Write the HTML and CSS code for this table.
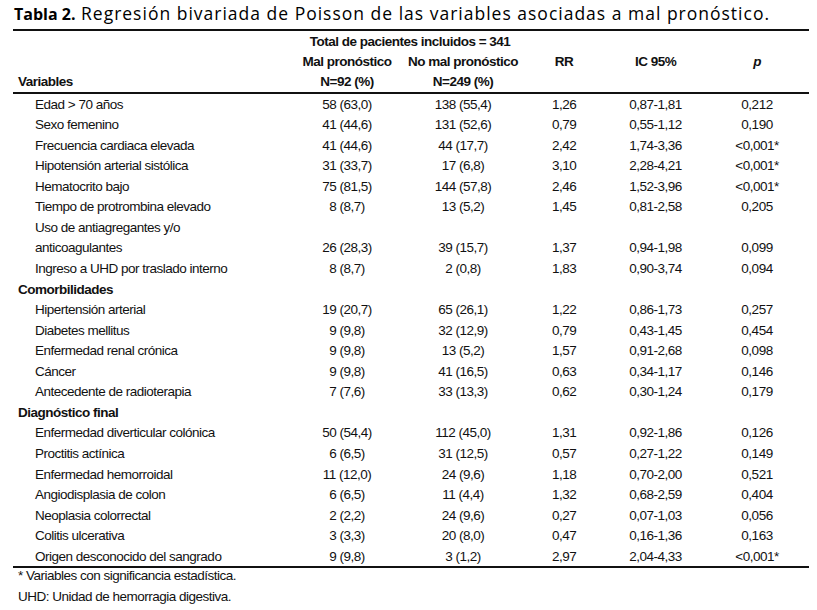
FILE: index.html
```html
<!DOCTYPE html>
<html lang="es">
<head>
<meta charset="utf-8">
<link rel="stylesheet" href="styles.css">
</head>
<body>
<div class="page">
  <h1 class="title"><b>Tabla 2.</b> Regresión bivariada de Poisson de las variables asociadas a mal pronóstico.</h1>
  <table class="tbl">
    <colgroup>
      <col class="c0"><col class="c1"><col class="c2"><col class="c3"><col class="c4"><col class="c5">
    </colgroup>
    <thead>
      <tr><th></th><th colspan="2" class="total">Total de pacientes incluidos = 341</th><th></th><th></th><th></th></tr>
      <tr><th></th><th>Mal pronóstico</th><th>No mal pronóstico</th><th>RR</th><th>IC 95%</th><th><i>p</i></th></tr>
      <tr class="last"><th class="lft">Variables</th><th>N=92 (%)</th><th>N=249 (%)</th><th></th><th></th><th></th></tr>
    </thead>
    <tbody>
      <tr><td class="var">Edad &gt; 70 años</td><td>58 (63,0)</td><td>138 (55,4)</td><td>1,26</td><td>0,87-1,81</td><td>0,212</td></tr>
      <tr><td class="var">Sexo femenino</td><td>41 (44,6)</td><td>131 (52,6)</td><td>0,79</td><td>0,55-1,12</td><td>0,190</td></tr>
      <tr><td class="var">Frecuencia cardiaca elevada</td><td>41 (44,6)</td><td>44 (17,7)</td><td>2,42</td><td>1,74-3,36</td><td>&lt;0,001*</td></tr>
      <tr><td class="var">Hipotensión arterial sistólica</td><td>31 (33,7)</td><td>17 (6,8)</td><td>3,10</td><td>2,28-4,21</td><td>&lt;0,001*</td></tr>
      <tr><td class="var">Hematocrito bajo</td><td>75 (81,5)</td><td>144 (57,8)</td><td>2,46</td><td>1,52-3,96</td><td>&lt;0,001*</td></tr>
      <tr><td class="var">Tiempo de protrombina elevado</td><td>8 (8,7)</td><td>13 (5,2)</td><td>1,45</td><td>0,81-2,58</td><td>0,205</td></tr>
      <tr><td class="var">Uso de antiagregantes y/o</td><td></td><td></td><td></td><td></td><td></td></tr>
      <tr><td class="var">anticoagulantes</td><td>26 (28,3)</td><td>39 (15,7)</td><td>1,37</td><td>0,94-1,98</td><td>0,099</td></tr>
      <tr><td class="var">Ingreso a UHD por traslado interno</td><td>8 (8,7)</td><td>2 (0,8)</td><td>1,83</td><td>0,90-3,74</td><td>0,094</td></tr>
      <tr><td class="sec">Comorbilidades</td><td></td><td></td><td></td><td></td><td></td></tr>
      <tr><td class="var">Hipertensión arterial</td><td>19 (20,7)</td><td>65 (26,1)</td><td>1,22</td><td>0,86-1,73</td><td>0,257</td></tr>
      <tr><td class="var">Diabetes mellitus</td><td>9 (9,8)</td><td>32 (12,9)</td><td>0,79</td><td>0,43-1,45</td><td>0,454</td></tr>
      <tr><td class="var">Enfermedad renal crónica</td><td>9 (9,8)</td><td>13 (5,2)</td><td>1,57</td><td>0,91-2,68</td><td>0,098</td></tr>
      <tr><td class="var">Cáncer</td><td>9 (9,8)</td><td>41 (16,5)</td><td>0,63</td><td>0,34-1,17</td><td>0,146</td></tr>
      <tr><td class="var">Antecedente de radioterapia</td><td>7 (7,6)</td><td>33 (13,3)</td><td>0,62</td><td>0,30-1,24</td><td>0,179</td></tr>
      <tr><td class="sec">Diagnóstico final</td><td></td><td></td><td></td><td></td><td></td></tr>
      <tr><td class="var">Enfermedad diverticular colónica</td><td>50 (54,4)</td><td>112 (45,0)</td><td>1,31</td><td>0,92-1,86</td><td>0,126</td></tr>
      <tr><td class="var">Proctitis actínica</td><td>6 (6,5)</td><td>31 (12,5)</td><td>0,57</td><td>0,27-1,22</td><td>0,149</td></tr>
      <tr><td class="var">Enfermedad hemorroidal</td><td>11 (12,0)</td><td>24 (9,6)</td><td>1,18</td><td>0,70-2,00</td><td>0,521</td></tr>
      <tr><td class="var">Angiodisplasia de colon</td><td>6 (6,5)</td><td>11 (4,4)</td><td>1,32</td><td>0,68-2,59</td><td>0,404</td></tr>
      <tr><td class="var">Neoplasia colorrectal</td><td>2 (2,2)</td><td>24 (9,6)</td><td>0,27</td><td>0,07-1,03</td><td>0,056</td></tr>
      <tr><td class="var">Colitis ulcerativa</td><td>3 (3,3)</td><td>20 (8,0)</td><td>0,47</td><td>0,16-1,36</td><td>0,163</td></tr>
      <tr class="last"><td class="var">Origen desconocido del sangrado</td><td>9 (9,8)</td><td>3 (1,2)</td><td>2,97</td><td>2,04-4,33</td><td>&lt;0,001*</td></tr>
    </tbody>
  </table>
  <div class="notes">
    <p>* Variables con significancia estadística.</p>
    <p>UHD: Unidad de hemorragia digestiva.</p>
  </div>
</div>
</body>
</html>
```

FILE: styles.css
```css
html, body {
  margin: 0;
  padding: 0;
  background: #fff;
}
.page {
  padding: 0 8px 0 13px;
  color: #111;
}
.title {
  margin: 0;
  padding: 1px 0 0 1px;
  height: 28px;
  font-family: "Open Sans", "DejaVu Sans", sans-serif;
  font-size: 17.5px;
  font-weight: 400;
  line-height: 24px;
  letter-spacing: 1px;
  color: #000;
}
.title b {
  font-weight: 700;
  font-size: 16px;
  letter-spacing: 0;
}
.tbl {
  width: 796px;
  border-collapse: collapse;
  table-layout: fixed;
  font-family: "Liberation Sans", Arial, sans-serif;
  font-size: 13.5px;
  letter-spacing: -0.5px;
  border-top: 2px solid #111;
}
.c0 { width: 277px; }
.c1 { width: 114px; }
.c2 { width: 118px; }
.c3 { width: 84px; }
.c4 { width: 99px; }
.c5 { width: 104px; }
.tbl th, .tbl td {
  padding: 0;
  text-align: center;
  white-space: nowrap;
}
.tbl th {
  height: 20.3px;
  font-weight: 700;
}
.tbl th.total {
  padding-left: 8px;
}
.tbl td {
  height: 20.55px;
  font-weight: 400;
}
.tbl thead tr.last th {
  border-bottom: 2px solid #111;
}
.tbl tbody tr.last td {
  border-bottom: 2px solid #111;
}
.tbl .lft, .tbl .sec {
  text-align: left;
  padding-left: 5px;
  font-weight: 700;
}
.tbl .var {
  text-align: left;
  padding-left: 22px;
}
.notes {
  font-family: "Liberation Sans", Arial, sans-serif;
  font-size: 13.5px;
  letter-spacing: -0.5px;
  padding-left: 5px;
}
.notes p {
  margin: 0;
  line-height: 16px;
}
.notes p + p {
  line-height: 26px;
}
```
